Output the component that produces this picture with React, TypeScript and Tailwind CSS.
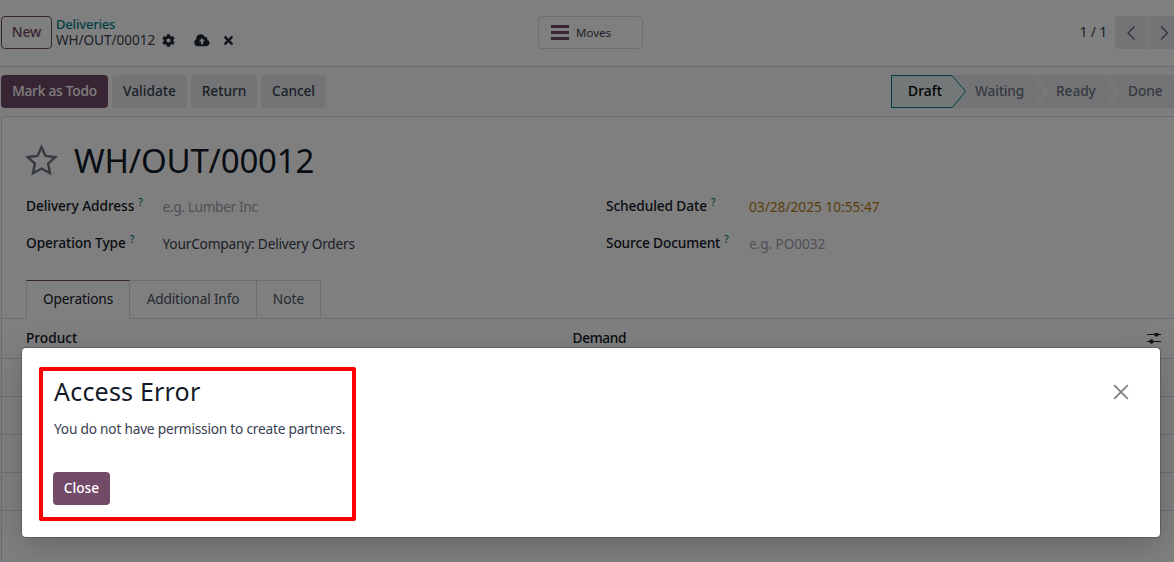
import React from "react";
import { FaCog, FaTimes } from "react-icons/fa";

function Help() {
  return <sup className="-top-[5px] ml-1 text-[10px] leading-none font-medium text-[#017e84]">?</sup>;
}

function TopBar() {
  return (
    <header className="flex h-[67px] items-start border-b border-[#d8dadd] bg-white">
      <button className="mt-4 ml-px h-[33px] w-[51px] rounded-[4px] border border-[#714b67] pb-[2px] text-[14px] font-medium tracking-[-0.2px] text-[#714b67]">
        New
      </button>
      <div className="mt-4 ml-1 w-[482px]">
        <div className="h-4 text-[13px] leading-4 font-medium tracking-[-0.19px] text-[#017e84]">Deliveries</div>
        <div className="flex h-4 items-center leading-4 text-[#374151]">
          <span className="w-[106px] text-[13.5px]">WH/OUT/00012</span>
          <FaCog className="size-[13px] text-[#1f2937]" />
          <svg className="ml-[19px] h-[13px] w-[16px]" viewBox="0 0 16 13" fill="#1f2937">
            <path d="M4 12.300A3.800 3.800 0 0 1 2.200 5.200 4.500 4.500 0 0 1 10.600 2.700 2.600 2.600 0 0 1 13.300 5.900 3.300 3.300 0 0 1 12.700 12.300Z" />
            <path d="M8 4.200 4.900 7.300H7v3h2v-3h2.100Z" fill="#fff" />
          </svg>
          <FaTimes className="ml-[12px] size-[13px] text-[#1f2937]" />
        </div>
      </div>
      <button className="mt-4 flex h-[33px] w-[105px] items-center rounded-[4px] border border-[#d8dadd] pl-3 text-[#374151]">
        <span className="flex w-[18px] flex-col gap-[3px]">
          <span className="h-[3px] bg-[#714b67]" />
          <span className="h-[3px] bg-[#714b67]" />
          <span className="h-[3px] bg-[#714b67]" />
        </span>
        <span className="ml-[7px] text-[11.5px]">Moves</span>
      </button>
      <div className="mt-4 ml-auto flex h-[33px] items-center">
        <span className="mr-2 pb-[2px] text-[14px] tracking-[-0.2px] text-[#374151]">1 / 1</span>
        <button className="flex h-[33px] w-8 items-center justify-center rounded-l-[4px] bg-[#e7e9ed]">
          <svg className="size-4" viewBox="0 0 16 16" fill="none" stroke="#5f6571" strokeWidth="1.3">
            <path d="M11.500 1.500 5 8l6.500 6.500" />
          </svg>
        </button>
        <button className="ml-px flex h-[33px] w-[26px] items-center justify-end bg-[#e7e9ed] pr-[2px]">
          <svg className="size-4" viewBox="0 0 16 16" fill="none" stroke="#5f6571" strokeWidth="1.3">
            <path d="m5 1.500 6.500 6.500L5 14.500" />
          </svg>
        </button>
      </div>
    </header>
  );
}

function StatusSteps() {
  return (
    <div className="relative h-[33px] w-[283px]">
      <svg className="absolute inset-0 h-[33px] w-[283px]" viewBox="0 0 283 33">
        <path d="M61 0H283V33H61L75 16.500Z" fill="#e7e9ed" />
        <path d="M142 0 156 16.500 142 33M213.500 0 227.500 16.500 213.500 33" fill="none" stroke="#f9faf9" strokeWidth="1.2" />
        <path d="M.5.500H61.200L74.500 16.500 61.200 32.500H.5Z" fill="#e6f2f3" stroke="#017e84" strokeWidth="1" />
      </svg>
      <div className="relative flex h-[33px] items-center pb-px text-[13.7px] font-medium tracking-[-0.05px] whitespace-nowrap text-[#6b7280]">
        <span className="w-[67px] pl-[17px] tracking-[0.15px] text-black">Draft</span>
        <span className="w-[82px] pl-[17px] tracking-[-0.15px]">Waiting</span>
        <span className="w-[72px] pl-[16px]">Ready</span>
        <span className="pl-[16px]">Done</span>
      </div>
    </div>
  );
}

function ActionBar() {
  const grey = "h-[33px] rounded-[4px] bg-[#e7e9ed] pb-px font-medium text-[#374151]";
  return (
    <div className="flex h-[49px] items-start justify-between pt-2 pl-px">
      <div className="flex gap-1 text-[13.7px] whitespace-nowrap">
        <button className="h-[33px] w-[107px] rounded-[4px] bg-[#714b67] pb-px font-medium tracking-[-0.22px] text-white">Mark as Todo</button>
        <button className={grey + " w-[75px]"}>Validate</button>
        <button className={grey + " w-[66px]"}>Return</button>
        <button className={grey + " w-[65px] tracking-[-0.1px]"}>Cancel</button>
      </div>
      <StatusSteps />
    </div>
  );
}

function Field({ label, labelClass, children }: { label: string; labelClass: string; children: React.ReactNode }) {
  return (
    <div className="flex h-[37px] items-start text-[13.7px] leading-5 whitespace-nowrap">
      <label className={labelClass + " font-medium text-[#111827]"}>
        {label}
        <Help />
      </label>
      <div className="pt-px">{children}</div>
    </div>
  );
}

function Sheet() {
  return (
    <main className="ml-px h-[446px] rounded-tl-[3px] border-t border-l border-[#d8dadd] bg-white">
      <div className="flex h-[79px] items-center pt-[7px] pl-6">
        <svg className="h-[32px] w-[32px]" viewBox="0 0 32 32" fill="none" stroke="#6b7280" strokeWidth="2.400">
          <path d="m15.500 3.200 4 8.700 9.700 1.200-7.100 6.600 1.900 9.500-8.500-4.700L7 29.200l1.900-9.500-7.100-6.600 9.700-1.200Z" />
        </svg>
        <h1 className="ml-[16px] text-[33px] leading-none tracking-[-0.18px] text-[#111827]">WH/OUT/00012</h1>
      </div>
      <div className="grid h-[84px] grid-cols-[580px_1fr] pl-6">
        <div>
          <Field label="Delivery Address" labelClass="w-[136.5px] tracking-[-0.08px]"><span className="tracking-[-0.36px] text-[#9ca3af]">e.g. Lumber Inc</span></Field>
          <Field label="Operation Type" labelClass="w-[136.5px] tracking-[-0.08px]"><span className="tracking-[-0.2px] text-[#374151]">YourCompany: Delivery Orders</span></Field>
        </div>
        <div>
          <Field label="Scheduled Date" labelClass="w-[143px] tracking-[-0.1px]"><span className="text-[#b67b0f]">03/28/2025 10:55:47</span></Field>
          <Field label="Source Document" labelClass="w-[143px] tracking-[-0.15px]"><span className="tracking-[-0.1px] text-[#9ca3af]">e.g. PO0032</span></Field>
        </div>
      </div>
      <nav className="flex h-[39px] text-[13.7px] whitespace-nowrap text-[#4b5563]">
        <span className="w-6 border-b border-[#d8dadd]" />
        <span className="w-[104px] border-x border-t border-x-[#d8dadd] border-t-[#714b67] pt-2 text-center tracking-[-0.15px] text-[#111827]">Operations</span>
        <span className="w-[127px] border-t border-r border-b border-[#d8dadd] pt-2 text-center tracking-[-0.17px]">Additional Info</span>
        <span className="w-[64px] border-t border-r border-b border-[#d8dadd] pt-2 text-center">Note</span>
        <span className="flex-1 border-b border-[#d8dadd]" />
      </nav>
      <div className="flex h-10 items-center border-b border-[#d8dadd] pl-6 text-[13.7px] font-medium text-[#111827]">
        <span className="w-[546.5px]">Product</span>
        <span className="flex-1 tracking-[-0.35px]">Demand</span>
        <svg className="mr-[13px] h-[12px] w-[14px]" viewBox="0 0 14 12" stroke="#1f2937" fill="#1f2937">
          <path d="M0 1.500H14M0 8.500H14" />
          <circle cx="9.500" cy="1.500" r="1.900" strokeWidth="0.500" />
          <circle cx="4.500" cy="8.500" r="1.900" strokeWidth="0.500" />
        </svg>
      </div>
      <div className="h-[38px] border-b border-[#d8dadd]" />
      <div className="h-[38px] border-b border-[#d8dadd]" />
      <div className="h-[38px] border-b border-[#d8dadd]" />
      <div className="h-[38px] border-b border-[#d8dadd]" />
    </main>
  );
}

function AccessErrorDialog() {
  return (
    <div className="absolute inset-0 bg-black/50">
      <section
        role="dialog"
        className="mt-[348px] ml-[22px] flex h-[189px] w-[1138px] items-start justify-between rounded-[4px] bg-white pt-[19px] pr-[31px] pl-[17px] shadow-[0_0_0_1px_rgba(0,0,0,0.2),0_8px_32px_rgba(0,0,0,0.2)]"
      >
        <div className="h-[154px] w-[317px] rounded-[2px] border-4 border-[#ff0000] pl-[10px] whitespace-nowrap">
          <h2 className="mt-[4px] pl-px text-[25px] leading-[32px] tracking-[0.2px] text-[#111827]">Access Error</h2>
          <p className="mt-[12px] pl-px text-[13.7px] leading-5 tracking-[-0.22px] text-[#374151]">You do not have permission to create partners.</p>
          <button className="mt-[33px] h-[33px] w-[57px] rounded-[4px] bg-[#714b67] pb-px text-[13.7px] font-medium text-white">Close</button>
        </div>
        <svg className="mt-[17px] size-4" viewBox="0 0 16 16" fill="none" stroke="#7f7f7f" strokeWidth="1.700">
          <path d="m1.200 1.200 13.600 13.600M14.800 1.200 1.200 14.800" />
        </svg>
      </section>
    </div>
  );
}

export default function App() {
  return (
    <div className="relative h-[562px] w-[1174px] overflow-hidden bg-[#f8fbf9] font-['Noto_Sans',sans-serif]">
      <TopBar />
      <ActionBar />
      <Sheet />
      <AccessErrorDialog />
    </div>
  );
}
